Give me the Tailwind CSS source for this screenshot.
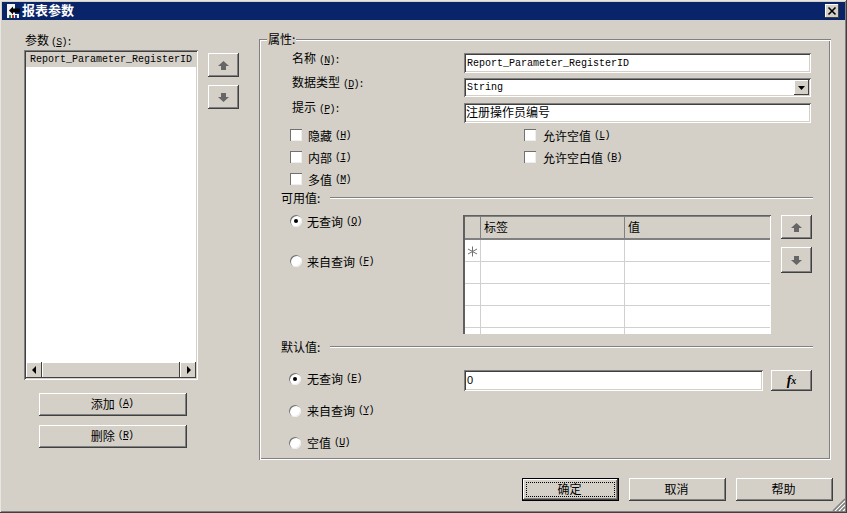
<!DOCTYPE html>
<html lang="zh">
<head>
<meta charset="UTF-8">
<title>报表参数</title>
<script src="https://cdn.jsdelivr.net/npm/@tailwindcss/browser@4"></script>
</head>
<body class="bg-[#d4d0c8]">
<div class="relative w-[847px] h-[513px] overflow-hidden bg-[#d4d0c8] text-black text-[12px] leading-[12px] font-['Noto_Sans_CJK_SC',sans-serif] shadow-[inset_-1px_-1px_0_#404040,inset_1px_1px_0_#e8e6e0,inset_-2px_-2px_0_#808080]">

  <!-- title bar -->
  <div class="h-[20px] pt-[2px] px-[2px]">
    <div class="h-[18px] bg-[#0a246a] flex items-center pl-[4px] pr-[6px]">
      <svg width="14" height="14" viewBox="0 0 14 14" class="shrink-0">
        <rect x="1" y="0" width="8" height="14" fill="#f4f4f4"/>
        <rect x="9" y="10" width="4" height="4" fill="#f4f4f4"/>
        <path d="M3 6.5 L7 2.5 V4.5 H14 V8.5 H7 V10.5 Z" fill="#000"/>
        <rect x="3" y="11" width="2" height="3" fill="#2a8a3a"/>
        <rect x="6" y="11" width="2" height="3" fill="#c03030"/>
        <rect x="9" y="11" width="2" height="3" fill="#2040a0"/>
      </svg>
      <span class="ml-[2px] -mt-[3px] text-white font-bold text-[13px] leading-[13px]">报表参数</span>
      <div class="ml-auto w-[14px] h-[14px] flex items-center justify-center bg-[#d4d0c8] shadow-[inset_-1px_-1px_0_#404040,inset_1px_1px_0_#fff]">
        <svg width="10" height="10" viewBox="0 0 10 10"><path d="M1.5 1.5 L8.5 8.5 M8.5 1.5 L1.5 8.5" stroke="#000" stroke-width="1.6" fill="none"/></svg>
      </div>
    </div>
  </div>

  <div class="flex h-[440px]">
    <!-- parameter list column -->
    <div class="w-[259px] pl-[24px] pt-[14px] shrink-0">
      <div class="h-[12px] ml-[1px]">参数<span class="ml-[2px] font-['Liberation_Mono'] text-[10px] tracking-[-0.8px]">(<u>S</u>):</span></div>
      <div class="flex mt-[4px]">
        <div class="w-[174px] h-[330px] bg-white flex flex-col p-[2px] shadow-[inset_1px_1px_0_#808080,inset_-1px_-1px_0_#fff,inset_2px_2px_0_#404040,inset_-2px_-2px_0_#d4d0c8]">
          <div class="h-[15px] bg-[#d4d0c8] pl-[4px] font-['Liberation_Mono'] text-[10px] leading-[15px] whitespace-nowrap">Report_Parameter_RegisterID</div>
          <div class="flex-1"></div>
          <div class="h-[16px] flex bg-[#d4d0c8]">
            <div class="w-[16px] flex items-center justify-center shadow-[inset_-1px_-1px_0_#404040,inset_1px_1px_0_#fff]">
              <svg width="5" height="8" viewBox="0 0 5 8"><path d="M4 0 V8 L0 4 Z" fill="#000"/></svg>
            </div>
            <div class="flex-1 shadow-[inset_-1px_-1px_0_#404040,inset_1px_1px_0_#fff]"></div>
            <div class="w-[16px] flex items-center justify-center shadow-[inset_-1px_-1px_0_#404040,inset_1px_1px_0_#fff]">
              <svg width="5" height="8" viewBox="0 0 5 8"><path d="M1 0 V8 L5 4 Z" fill="#000"/></svg>
            </div>
          </div>
        </div>
        <div class="ml-[10px] pt-[3px] flex flex-col gap-[8px]">
          <div class="w-[31px] h-[24px] flex items-center justify-center shadow-[inset_-1px_-1px_0_#404040,inset_1px_1px_0_#fff,inset_-2px_-2px_0_#808080]">
            <svg width="11" height="9" viewBox="0 0 11 9"><path d="M5.5 0 L11 5 H8 V9 H3 V5 H0 Z" fill="#666"/></svg>
          </div>
          <div class="w-[31px] h-[24px] flex items-center justify-center shadow-[inset_-1px_-1px_0_#404040,inset_1px_1px_0_#fff,inset_-2px_-2px_0_#808080]">
            <svg width="11" height="9" viewBox="0 0 11 9"><path d="M5.5 9 L11 4 H8 V0 H3 V4 H0 Z" fill="#666"/></svg>
          </div>
        </div>
      </div>
      <div class="ml-[15px] mt-[13px] flex flex-col gap-[9px]">
        <div class="w-[148px] h-[23px] pb-[2px] pr-[2px] flex items-center justify-center shadow-[inset_-1px_-1px_0_#404040,inset_1px_1px_0_#fff,inset_-2px_-2px_0_#808080]">添加<span class="ml-[3px] font-['Liberation_Mono'] text-[10px] tracking-[-0.8px]">(<u>A</u>)</span></div>
        <div class="w-[148px] h-[23px] pb-[2px] pr-[2px] flex items-center justify-center shadow-[inset_-1px_-1px_0_#404040,inset_1px_1px_0_#fff,inset_-2px_-2px_0_#808080]">删除<span class="ml-[3px] font-['Liberation_Mono'] text-[10px] tracking-[-0.8px]">(<u>R</u>)</span></div>
      </div>
    </div>

    <!-- properties group -->
    <div class="relative mt-[19px] w-[572px] h-[421px] shrink-0 shadow-[inset_1px_1px_0_#808080,inset_-1px_-1px_0_#fff,inset_2px_2px_0_#fff,inset_-2px_-2px_0_#808080]">
      <span class="absolute left-[8px] top-[-6px] px-[1px] bg-[#d4d0c8]">属性:</span>

      <div class="pt-[14px]">
        <div class="flex items-start h-[25px] pl-[33px]">
          <div class="w-[172px] -mt-[1px]">名称<span class="ml-[3px] font-['Liberation_Mono'] text-[10px] tracking-[-0.8px]">(<u>N</u>):</span></div>
          <div class="w-[347px] h-[20px] bg-white pl-[3px] pt-[1px] font-['Liberation_Mono'] text-[10px] leading-[20px] whitespace-nowrap shadow-[inset_1px_1px_0_#808080,inset_-1px_-1px_0_#fff,inset_2px_2px_0_#404040,inset_-2px_-2px_0_#d4d0c8]">Report_Parameter_RegisterID</div>
        </div>
        <div class="flex items-start h-[25px] pl-[33px]">
          <div class="w-[172px] -mt-[2px]">数据类型<span class="ml-[3px] font-['Liberation_Mono'] text-[10px] tracking-[-0.8px]">(<u>D</u>):</span></div>
          <div class="w-[347px] h-[19px] bg-white flex items-center pl-[3px] pr-[2px] font-['Liberation_Mono'] text-[10px] shadow-[inset_1px_1px_0_#808080,inset_-1px_-1px_0_#fff,inset_2px_2px_0_#404040,inset_-2px_-2px_0_#d4d0c8]">
            <span>String</span>
            <div class="ml-auto w-[15px] h-[15px] bg-[#d4d0c8] flex items-center justify-center shadow-[inset_-1px_-1px_0_#404040,inset_1px_1px_0_#fff]">
              <svg width="7" height="4" viewBox="0 0 7 4"><path d="M0 0 H7 L3.5 4 Z" fill="#000"/></svg>
            </div>
          </div>
        </div>
        <div class="flex items-start h-[21px] pl-[33px]">
          <div class="w-[172px] -mt-[2px]">提示<span class="ml-[3px] font-['Liberation_Mono'] text-[10px] tracking-[-0.8px]">(<u>P</u>):</span></div>
          <div class="w-[347px] h-[20px] bg-white pl-[2px] leading-[18px] shadow-[inset_1px_1px_0_#808080,inset_-1px_-1px_0_#fff,inset_2px_2px_0_#404040,inset_-2px_-2px_0_#d4d0c8]">注册操作员编号</div>
        </div>

        <!-- checkboxes -->
        <div class="grid grid-cols-[234px_auto] auto-rows-[22px] items-center pl-[31px]">
          <div class="flex items-center"><div class="w-[12px] h-[12px] bg-white shadow-[inset_1px_1px_0_#707070,inset_-1px_-1px_0_#eee]"></div><span class="ml-[6px] pt-[2px]">隐藏</span><span class="ml-[3px] pt-[2px] font-['Liberation_Mono'] text-[10px] tracking-[-0.8px]">(<u>H</u>)</span></div>
          <div class="flex items-center"><div class="w-[12px] h-[12px] bg-white shadow-[inset_1px_1px_0_#707070,inset_-1px_-1px_0_#eee]"></div><span class="ml-[7px] pt-[2px]">允许空值</span><span class="ml-[3px] pt-[2px] font-['Liberation_Mono'] text-[10px] tracking-[-0.8px]">(<u>L</u>)</span></div>
          <div class="flex items-center"><div class="w-[12px] h-[12px] bg-white shadow-[inset_1px_1px_0_#707070,inset_-1px_-1px_0_#eee]"></div><span class="ml-[6px] pt-[2px]">内部</span><span class="ml-[3px] pt-[2px] font-['Liberation_Mono'] text-[10px] tracking-[-0.8px]">(<u>I</u>)</span></div>
          <div class="flex items-center"><div class="w-[12px] h-[12px] bg-white shadow-[inset_1px_1px_0_#707070,inset_-1px_-1px_0_#eee]"></div><span class="ml-[7px] pt-[2px]">允许空白值</span><span class="ml-[3px] pt-[2px] font-['Liberation_Mono'] text-[10px] tracking-[-0.8px]">(<u>B</u>)</span></div>
          <div class="flex items-center"><div class="w-[12px] h-[12px] bg-white shadow-[inset_1px_1px_0_#707070,inset_-1px_-1px_0_#eee]"></div><span class="ml-[6px] pt-[2px]">多值</span><span class="ml-[3px] pt-[2px] font-['Liberation_Mono'] text-[10px] tracking-[-0.8px]">(<u>M</u>)</span></div>
        </div>

        <!-- available values -->
        <div class="flex items-center h-[12px] mt-[2px] pl-[22px] pr-[18px]">
          <span>可用值:</span>
          <div class="ml-[10px] flex-1 h-[2px] bg-[#808080] border-b border-white"></div>
        </div>
        <div class="flex h-[130px] pl-[31px]">
          <div class="w-[173px] pt-[11px]">
            <div class="flex items-center h-[12px]">
              <div class="w-[12px] h-[12px] rounded-full bg-white flex items-center justify-center shadow-[inset_1px_1px_0_#707070,inset_-1px_-1px_0_#eee]"><div class="w-[4px] h-[4px] rounded-full bg-black"></div></div>
              <span class="ml-[5px] pt-[2px]">无查询</span><span class="ml-[3px] pt-[2px] font-['Liberation_Mono'] text-[10px] tracking-[-0.8px]">(<u>Q</u>)</span>
            </div>
            <div class="flex items-center h-[12px] mt-[28px]">
              <div class="w-[12px] h-[12px] rounded-full bg-white shadow-[inset_1px_1px_0_#707070,inset_-1px_-1px_0_#eee]"></div>
              <span class="ml-[5px] pt-[2px]">来自查询</span><span class="ml-[3px] pt-[2px] font-['Liberation_Mono'] text-[10px] tracking-[-0.8px]">(<u>F</u>)</span>
            </div>
          </div>
          <!-- label/value grid -->
          <div class="w-[308px] h-[119px] bg-white overflow-hidden mt-[11px] grid grid-cols-[16px_144px_1fr] grid-rows-[24px_22px_22px_22px_22px_22px] p-[1px] pl-[2px] shadow-[inset_1px_1px_0_#606060,inset_2px_0_0_#606060,inset_-1px_-1px_0_#fff]">
            <div class="bg-[#d4d0c8] border-t border-r border-b-2 border-[#808080]"></div>
            <div class="bg-[#d4d0c8] border-t border-r border-b-2 border-[#808080] pl-[3px] leading-[20px]">标签</div>
            <div class="bg-[#d4d0c8] border-t border-b-2 border-[#808080] pl-[3px] leading-[20px]">值</div>
            <div class="border-r border-b border-[#d0d0d0] flex items-center justify-center pt-[2px]">
              <svg width="11" height="11" viewBox="0 0 11 11"><path d="M5.5 0.5 V10.5 M1 3 L10 8 M10 3 L1 8" stroke="#707070" stroke-width="1" fill="none"/></svg>
            </div>
            <div class="border-r border-b border-[#d0d0d0]"></div>
            <div class="border-b border-[#d0d0d0]"></div>
            <div class="border-r border-b border-[#d0d0d0]"></div>
            <div class="border-r border-b border-[#d0d0d0]"></div>
            <div class="border-b border-[#d0d0d0]"></div>
            <div class="border-r border-b border-[#d0d0d0]"></div>
            <div class="border-r border-b border-[#d0d0d0]"></div>
            <div class="border-b border-[#d0d0d0]"></div>
            <div class="border-r border-b border-[#d0d0d0]"></div>
            <div class="border-r border-b border-[#d0d0d0]"></div>
            <div class="border-b border-[#d0d0d0]"></div>
            <div class="border-r border-[#d0d0d0]"></div>
            <div class="border-r border-[#d0d0d0]"></div>
            <div></div>
          </div>
          <div class="ml-[10px] mt-[11px] flex flex-col gap-[8px]">
            <div class="w-[31px] h-[24px] flex items-center justify-center shadow-[inset_-1px_-1px_0_#404040,inset_1px_1px_0_#fff,inset_-2px_-2px_0_#808080]">
              <svg width="11" height="9" viewBox="0 0 11 9"><path d="M5.5 0 L11 5 H8 V9 H3 V5 H0 Z" fill="#666"/></svg>
            </div>
            <div class="w-[31px] h-[26px] flex items-center justify-center shadow-[inset_-1px_-1px_0_#404040,inset_1px_1px_0_#fff,inset_-2px_-2px_0_#808080]">
              <svg width="11" height="9" viewBox="0 0 11 9"><path d="M5.5 9 L11 4 H8 V0 H3 V4 H0 Z" fill="#666"/></svg>
            </div>
          </div>
        </div>

        <!-- default values -->
        <div class="flex items-center h-[12px] mt-[7px] pl-[22px] pr-[18px]">
          <span>默认值:</span>
          <div class="ml-[10px] flex-1 h-[2px] bg-[#808080] border-b border-white"></div>
        </div>
        <div class="flex pl-[30px] mt-[17px]">
          <div class="w-[175px] pt-[3px] flex flex-col gap-[20px]">
            <div class="flex items-center h-[12px]">
              <div class="w-[12px] h-[12px] rounded-full bg-white flex items-center justify-center shadow-[inset_1px_1px_0_#707070,inset_-1px_-1px_0_#eee]"><div class="w-[4px] h-[4px] rounded-full bg-black"></div></div>
              <span class="ml-[6px]">无查询</span><span class="ml-[3px] font-['Liberation_Mono'] text-[10px] tracking-[-0.8px]">(<u>E</u>)</span>
            </div>
            <div class="flex items-center h-[12px]">
              <div class="w-[12px] h-[12px] rounded-full bg-white shadow-[inset_1px_1px_0_#707070,inset_-1px_-1px_0_#eee]"></div>
              <span class="ml-[6px]">来自查询</span><span class="ml-[3px] font-['Liberation_Mono'] text-[10px] tracking-[-0.8px]">(<u>Y</u>)</span>
            </div>
            <div class="flex items-center h-[12px]">
              <div class="w-[12px] h-[12px] rounded-full bg-white shadow-[inset_1px_1px_0_#707070,inset_-1px_-1px_0_#eee]"></div>
              <span class="ml-[6px]">空值</span><span class="ml-[3px] font-['Liberation_Mono'] text-[10px] tracking-[-0.8px]">(<u>U</u>)</span>
            </div>
          </div>
          <div class="w-[299px] h-[21px] bg-white pl-[3px] font-['Liberation_Sans'] text-[11px] leading-[20px] shadow-[inset_1px_1px_0_#808080,inset_-1px_-1px_0_#fff,inset_2px_2px_0_#404040,inset_-2px_-2px_0_#d4d0c8]">0</div>
          <div class="ml-[8px] w-[41px] h-[21px] flex items-center justify-center font-['Liberation_Serif'] italic font-bold text-[14px] shadow-[inset_-1px_-1px_0_#404040,inset_1px_1px_0_#fff,inset_-2px_-2px_0_#808080]">f<span class="text-[10px]">x</span></div>
        </div>
      </div>
    </div>
  </div>

  <!-- footer buttons -->
  <div class="flex justify-end gap-[10px] mt-[18px] pr-[14px]">
    <div class="w-[97px] h-[23px] border border-black flex items-center justify-center shadow-[inset_-1px_-1px_0_#404040,inset_1px_1px_0_#fff,inset_-2px_-2px_0_#808080]">
      <div class="w-[89px] h-[15px] border border-dotted border-black flex items-center justify-center pb-[1px] pr-[2px]">确定</div>
    </div>
    <div class="w-[97px] h-[23px] pb-[2px] pr-[2px] flex items-center justify-center shadow-[inset_-1px_-1px_0_#404040,inset_1px_1px_0_#fff,inset_-2px_-2px_0_#808080]">取消</div>
    <div class="w-[97px] h-[23px] pb-[2px] pr-[2px] flex items-center justify-center shadow-[inset_-1px_-1px_0_#404040,inset_1px_1px_0_#fff,inset_-2px_-2px_0_#808080]">帮助</div>
  </div>

  <!-- size grip -->
  <svg class="absolute right-[2px] bottom-[2px]" width="13" height="13" viewBox="0 0 13 13">
    <path d="M13 1 L1 13 M13 5 L5 13 M13 9 L9 13" stroke="#808080" stroke-width="1.5" fill="none"/>
    <path d="M13 3 L3 13 M13 7 L7 13 M13 11 L11 13" stroke="#fff" stroke-width="1" fill="none"/>
  </svg>
</div>
</body>
</html>
